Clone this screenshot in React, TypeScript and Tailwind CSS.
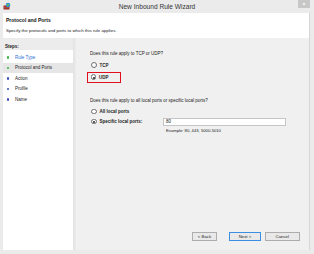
import React from "react";

const F = { fontFamily: '"Liberation Sans", Arial, sans-serif' };

function Radio({ checked }: { checked?: boolean }) {
  return (
    <span className="relative inline-block w-[5.5px] h-[5.5px] rounded-full border-[0.5px] border-[#6f6f6f] bg-white shrink-0">
      {checked && (
        <span className="absolute left-[1.25px] top-[1.25px] w-[2px] h-[2px] rounded-full bg-[#222]" />
      )}
    </span>
  );
}

function Step({ label, done, active, link }: { label: string; done?: boolean; active?: boolean; link?: boolean }) {
  return (
    <div className={`flex items-center h-[10.5px] pl-[3.5px] ${active ? "bg-[#e6e6e6]" : ""}`}>
      <span className={`w-[2.5px] h-[2.5px] rounded-full shrink-0 ${done ? "bg-[#3cb043]" : "bg-[#3b4cc0]"}`} />
      <span className={`ml-[6px] text-[4.5px] leading-[5px] ${link ? "text-[#2a6fd6]" : "text-[#222]"}`}>{label}</span>
    </div>
  );
}

export default function App() {
  return (
    <div style={F} className="w-[314px] h-[254px] bg-[#ebebeb] flex flex-col overflow-hidden">
      {/* Title bar */}
      <div className="relative h-[13px] shrink-0 flex items-center justify-center">
        <svg className="absolute left-[3px] top-[2px]" width="8" height="8" viewBox="0 0 8 8">
          <rect x="0.5" y="3.5" width="6" height="4" fill="#a0332a" />
          <line x1="0.5" y1="5.5" x2="6.5" y2="5.5" stroke="#c86a55" strokeWidth="0.4" />
          <circle cx="5" cy="3" r="2.3" fill="#2f8fd8" />
          <path d="M3.6 2.2 Q5 1 6.4 2.6 Q5.2 3.4 4.6 4.6 Q3.8 3.6 3.6 2.2Z" fill="#6cc04a" />
        </svg>
        <span className="text-[6.6px] leading-[8px] text-[#333]">New Inbound Rule Wizard</span>
        <div className="absolute right-[4px] top-0 w-[12px] h-[8px] bg-[#c7c7c7] flex items-center justify-center">
          <span className="text-white text-[5px] leading-[5px] font-bold">×</span>
        </div>
      </div>

      {/* Client area */}
      <div className="flex-1 ml-[3px] mr-[4px] mb-[4px] flex flex-col border-r border-[#d6d6d6]">
        {/* Header */}
        <div className="h-[25px] bg-white shrink-0 px-[3px] pt-[4px]">
          <div className="text-[5px] leading-[6px] font-bold text-[#111]">Protocol and Ports</div>
          <div className="mt-[5px] text-[4.4px] leading-[5px] text-[#222]">
            Specify the protocols and ports to which this rule applies.
          </div>
        </div>

        {/* Body */}
        <div className="flex-1 flex bg-[#f0f0f0]">
          {/* Steps */}
          <div className="w-[70px] flex flex-col">
            <div className="h-[12px] pt-[6px] pl-[2px] text-[4.5px] leading-[5px] font-bold text-[#222] bg-[#ececec]">
              Steps:
            </div>
            <div className="flex-1 bg-white pt-[2px]">
              <Step label="Rule Type" done link />
              <Step label="Protocol and Ports" done active />
              <Step label="Action" />
              <Step label="Profile" />
              <Step label="Name" />
            </div>
          </div>
          <div className="w-[3px] bg-gradient-to-r from-[#e2e2e2] to-[#ececec]" />

          {/* Content */}
          <div className="flex-1 flex flex-col pl-[14px] pt-[13px] text-[4.5px] leading-[5px] text-[#222]">
            <div>Does this rule apply to TCP or UDP?</div>
            <div className="mt-[6px] ml-[1px] h-[6px] flex items-center">
              <Radio />
              <span className="ml-[3px] font-bold">TCP</span>
            </div>
            <div className="mt-[3.5px] -ml-[3px] w-[34px] h-[11px] border-[1.5px] border-[#e0101e] flex items-center pl-[2.5px]">
              <Radio checked />
              <span className="ml-[3px] font-bold">UDP</span>
            </div>
            <div className="mt-[15.5px]">Does this rule apply to all local ports or specific local ports?</div>
            <div className="mt-[5.5px] ml-[1px] h-[6px] flex items-center">
              <Radio />
              <span className="ml-[3px] font-bold">All local ports</span>
            </div>
            <div className="mt-[3px] ml-[1px] h-[8px] flex items-center">
              <Radio checked />
              <span className="ml-[3px] w-[63.5px] font-bold">Specific local ports:</span>
              <div className="w-[123px] h-[8px] bg-white border-[0.5px] border-[#c6c6c6] flex items-center pl-[2px]">
                80
              </div>
            </div>
            <div className="mt-[2.5px] ml-[76px] text-[4.2px]">Example: 80, 443, 5000-5010</div>

            <div className="mt-auto mb-[9px] mr-[9px] flex justify-end items-center text-[4.3px]">
              <div className="w-[25px] h-[9px] bg-[#e9e9e9] border-[0.5px] border-[#adadad] flex items-center justify-center">&lt; Back</div>
              <div className="ml-[12px] w-[32px] h-[9px] bg-[#e9e9e9] border-[0.5px] border-[#3c8fe0] flex items-center justify-center">Next &gt;</div>
              <div className="ml-[3.5px] w-[35.5px] h-[9px] bg-[#e9e9e9] border-[0.5px] border-[#adadad] flex items-center justify-center">Cancel</div>
            </div>
          </div>
        </div>
      </div>
    </div>
  );
}
